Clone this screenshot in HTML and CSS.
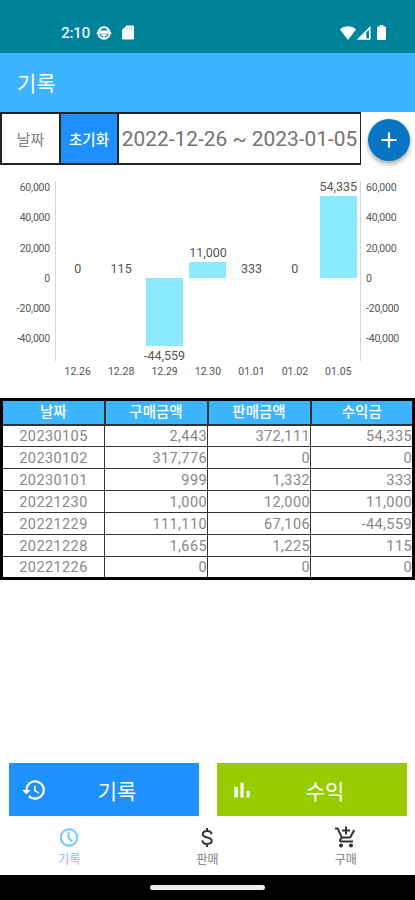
FILE: index.html
```html
<!DOCTYPE html>
<html lang="ko">
<head>
    <meta charset="UTF-8">
    <meta name="viewport" content="width=device-width, initial-scale=1.0">
    <title>기록</title>
    <link rel="stylesheet" href="styles.css">
</head>
<body>

    <div class="status-bar">
        <span class="time">2:10</span>
        <svg class="status-sync" width="16" height="16" viewBox="0 0 16 16">
            <circle cx="8" cy="8" r="5.7" fill="none" stroke="#fff" stroke-width="2"/>
            <path d="M0.6 8h14.8M4 6.3h8M5 10h6M8 10v3" fill="none" stroke="#fff" stroke-width="1.7"/>
        </svg>
        <svg class="status-card" width="12" height="15" viewBox="0 0 12 15">
            <path d="M4.5 0.5H11a1 1 0 0 1 1 1V13.500a1 1 0 0 1-1 1H1a1 1 0 0 1-1-1V5z" fill="#fff"/>
            <path d="M5 2v2.200M7.300 2v2.200M9.600 2v2.200" stroke="#7fc0cb" stroke-width="0.7"/>
        </svg>
        <div class="status-right">
            <svg width="16" height="14" viewBox="0 0 16 14">
                <path d="M8 14L0 3.500C4.500-0.700 11.500-0.700 16 3.500z" fill="#fff"/>
            </svg>
            <svg width="14" height="14" viewBox="0 0 14 14">
                <path d="M12.800 1.800V13H1.600zM8.500 6v7" fill="none" stroke="#fff" stroke-width="1.500"/>
                <path d="M8.500 6V13H1.600z" fill="#fff"/>
            </svg>
            <svg class="battery" width="9" height="15" viewBox="0 0 9 15">
                <path d="M2.700 0h3.600v1.600H8a1 1 0 0 1 1 1V14a1 1 0 0 1-1 1H1a1 1 0 0 1-1-1V2.600a1 1 0 0 1 1-1h1.700z" fill="#fff"/>
            </svg>
        </div>
    </div>

    <h1 class="app-bar">기록</h1>

    <div class="filter">
        <div class="filter-box">
            <div class="filter-label">날짜</div>
            <button class="reset-btn">초기화</button>
            <div class="range">2022-12-26 ~ 2023-01-05</div>
        </div>
        <button class="add-btn">
            <svg width="18" height="18" viewBox="0 0 18 18">
                <path d="M9 1.500v15M1.500 9h15" stroke="#fff" stroke-width="2.200"/>
            </svg>
        </button>
    </div>

    <div class="chart">
        <div class="axis axis-left">
            <span>60,000</span><span>40,000</span><span>20,000</span><span>0</span><span>-20,000</span><span>-40,000</span>
        </div>
        <div class="plot">
            <div class="col">
                <div class="plus"><span>0</span></div>
                <div class="minus"></div>
                <div class="day">12.26</div>
            </div>
            <div class="col">
                <div class="plus"><span>115</span></div>
                <div class="minus"></div>
                <div class="day">12.28</div>
            </div>
            <div class="col">
                <div class="plus"></div>
                <div class="minus"><div class="bar" style="height: 67.5px"></div><span>-44,559</span></div>
                <div class="day">12.29</div>
            </div>
            <div class="col">
                <div class="plus"><span>11,000</span><div class="bar" style="height: 16.5px"></div></div>
                <div class="minus"></div>
                <div class="day">12.30</div>
            </div>
            <div class="col">
                <div class="plus"><span>333</span><div class="bar thin" style="height: 0.5px"></div></div>
                <div class="minus"></div>
                <div class="day">01.01</div>
            </div>
            <div class="col">
                <div class="plus"><span>0</span></div>
                <div class="minus"></div>
                <div class="day">01.02</div>
            </div>
            <div class="col">
                <div class="plus"><span>54,335</span><div class="bar" style="height: 82px"></div></div>
                <div class="minus"></div>
                <div class="day">01.05</div>
            </div>
        </div>
        <div class="axis axis-right">
            <span>60,000</span><span>40,000</span><span>20,000</span><span>0</span><span>-20,000</span><span>-40,000</span>
        </div>
    </div>

    <table class="records">
        <thead>
            <tr><th>날짜</th><th>구매금액</th><th>판매금액</th><th>수익금</th></tr>
        </thead>
        <tbody>
            <tr><td>20230105</td><td>2,443</td><td>372,111</td><td>54,335</td></tr>
            <tr><td>20230102</td><td>317,776</td><td>0</td><td>0</td></tr>
            <tr><td>20230101</td><td>999</td><td>1,332</td><td>333</td></tr>
            <tr><td>20221230</td><td>1,000</td><td>12,000</td><td>11,000</td></tr>
            <tr><td>20221229</td><td>111,110</td><td>67,106</td><td>-44,559</td></tr>
            <tr><td>20221228</td><td>1,665</td><td>1,225</td><td>115</td></tr>
            <tr><td>20221226</td><td>0</td><td>0</td><td>0</td></tr>
        </tbody>
    </table>

    <div class="actions">
        <button class="action action-record">
            <svg width="26" height="26" viewBox="0 0 24 24" fill="#fff">
                <path d="M13 3a9 9 0 0 0-9 9H1l3.900 3.900L9 12H6a7 7 0 1 1 2.060 4.940l-1.420 1.420A9 9 0 1 0 13 3zm-1 5v5l4.280 2.540.720-1.210-3.500-2.080V8z"/>
            </svg>
            <span>기록</span>
        </button>
        <button class="action action-profit">
            <svg width="26" height="26" viewBox="0 0 24 24" fill="#fff">
                <path d="M5 9.200h3.200V19H5zM10.600 5h2.900v14h-2.900zM16.200 13H19v6h-2.800z"/>
            </svg>
            <span>수익</span>
        </button>
    </div>

    <nav class="tabs">
        <a class="tab active">
            <svg width="22" height="22" viewBox="0 0 24 24" fill="none" stroke="#6bc4fa" stroke-width="2">
                <circle cx="12" cy="12" r="9"/>
                <path d="M11.500 6v6.500l4.200 4"/>
            </svg>
            <span>기록</span>
        </a>
        <a class="tab">
            <svg width="26" height="26" viewBox="0 0 24 24" fill="none" stroke="#333" stroke-width="1.9">
                <path d="M12 2.800v3M12 18.200v3M16.300 8.900C16.100 6.900 14.500 5.800 12.100 5.800 9.700 5.800 8 6.900 8 8.800c0 4.200 8.600 2.200 8.600 6.400 0 1.900-1.800 3-4.400 3-2.700 0-4.500-1.200-4.700-3.400"/>
            </svg>
            <span>판매</span>
        </a>
        <a class="tab">
            <svg width="24" height="24" viewBox="0 0 24 24" fill="#333">
                <path d="M11 9h2V6h3V4h-3V1h-2v3H8v2h3v3zm-4 9c-1.100 0-1.990.900-1.990 2S5.900 22 7 22s2-.900 2-2-.900-2-2-2zm10 0c-1.100 0-1.990.900-1.990 2s.890 2 1.990 2 2-.900 2-2-.900-2-2-2zm-9.830-3.250.030-.120.900-1.630h7.450c.750 0 1.410-.410 1.750-1.030l3.860-7.010L19.420 4h-.010l-1.100 2-2.760 5H8.530l-.130-.270L6.160 6l-.950-2-.940-2H1v2h2l3.600 7.590-1.350 2.450c-.160.280-.250.610-.250.960 0 1.100.900 2 2 2h12v-2H7.420c-.130 0-.250-.110-.250-.250z"/>
            </svg>
            <span>구매</span>
        </a>
    </nav>

    <div class="gesture-bar"><div class="handle"></div></div>

</body>
</html>
```
FILE: styles.css
```css
*{
    box-sizing: border-box;
}

body{
    margin: 0;
    height: 900px;
    display: flex;
    flex-direction: column;
    background: #fff;
    font-family: Roboto, "Noto Sans CJK KR", sans-serif;
    overflow: hidden;
}

button{
    border: none;
    padding: 0;
    font-family: inherit;
    color: #fff;
}

svg{
    display: block;
    flex: none;
}

.status-bar{
    height: 53px;
    padding: 12px 29px 0 61px;
    display: flex;
    align-items: center;
    background: #008299;
    color: #e0f0f3;
}

.time{
    width: 35px;
    font-size: 15.500px;
    letter-spacing: -0.4px;
    font-weight: 500;
}

.status-card{
    margin-left: 10px;
}

.status-right{
    margin-left: auto;
    display: flex;
    align-items: center;
    gap: 1px;
}

.battery{
    margin-left: 5px;
}

.app-bar{
    margin: 0;
    height: 59px;
    padding: 0 17px;
    background: #3db4ff;
    color: #fff;
    font-size: 21px;
    font-weight: 400;
    line-height: 62px;
}

.filter{
    height: 53px;
    display: flex;
}

.filter-box{
    width: 361px;
    display: grid;
    grid-template-columns: 57px 56px 1fr;
    gap: 2px;
    padding: 2px 1px 2px 2px;
    background: #222;
}

.filter-box > *{
    display: flex;
    justify-content: center;
    align-items: center;
    background: #fff;
    white-space: nowrap;
}

.filter-label{
    color: #808080;
    font-size: 15px;
}

.filter-box .reset-btn{
    background: #1e90ff;
    font-size: 14.500px;
    font-weight: 500;
}

.range{
    color: #737373;
    font-size: 20.900px;
}

.add-btn{
    width: 42px;
    height: 42px;
    margin: 7px 0 0 7px;
    display: flex;
    justify-content: center;
    align-items: center;
    border-radius: 50%;
    background: #0775c4;
    box-shadow: 0 3px 5px rgba(0,0,0,0.35);
}

.chart{
    height: 233px;
    padding-top: 16px;
    display: flex;
    color: #555;
}

.axis{
    display: flex;
    flex-direction: column;
    padding-top: 7px;
    margin-top: -15px;
    font-size: 10.500px;
    letter-spacing: -0.2px;
    line-height: 30.300px;
}

.axis-left{
    width: 55px;
    padding-right: 5px;
    text-align: right;
}

.axis-right{
    padding-left: 5px;
}

.plot{
    width: 306px;
    height: 180px;
    display: grid;
    grid-template-columns: repeat(7, 1fr);
    border: solid #d5d5d5;
    border-width: 0 1px;
}

.col{
    display: flex;
    flex-direction: column;
    font-size: 12.500px;
    line-height: 18px;
}

.plus,
.minus{
    display: flex;
    flex-direction: column;
    align-items: center;
    flex: none;
}

.plus{
    height: 97px;
    justify-content: flex-end;
}

.minus{
    height: 83px;
}

.minus span{
    margin-top: 1px;
}

.bar{
    width: 37px;
    background: #8ceaff;
    flex: none;
}

.bar.thin{
    opacity: 0.2;
}

.day{
    text-align: center;
    font-size: 10.500px;
    line-height: 21px;
}

.records{
    width: 415px;
    height: 182px;
    table-layout: fixed;
    border-collapse: collapse;
    border: 3px solid #000;
    color: #888;
    font-size: 14.500px;
    letter-spacing: 0.4px;
}

.records th,
.records td{
    height: 22px;
    padding: 2px 0 0;
    border: 1px solid #333;
    line-height: 18px;
    text-align: right;
}

.records th{
    height: 25px;
    border-width: 2px;
    background: #3db4ff;
    color: #fff;
    font-weight: 500;
    letter-spacing: 0;
    text-align: center;
}

.records td:first-child{
    text-align: center;
}

.actions{
    margin-top: auto;
    padding: 0 8px 0 9px;
    display: flex;
    gap: 18px;
}

.action{
    flex: 1;
    height: 53px;
    padding: 0 12px;
    display: flex;
    align-items: center;
    font-size: 21px;
}

.action span{
    flex: 1;
    text-align: center;
}

.action-record{
    background: #1e90ff;
}

.action-profit{
    background: #99cc00;
}

.tabs{
    height: 59px;
    display: flex;
}

.tab{
    flex: 1;
    padding-top: 9px;
    display: flex;
    flex-direction: column;
    align-items: center;
    color: #808080;
    font-size: 12px;
    line-height: 20px;
}

.tab svg{
    height: 25px;
}

.tab.active{
    color: #6bc4fa;
}

.gesture-bar{
    height: 25px;
    padding-top: 10px;
    background: #000;
}

.handle{
    width: 115px;
    height: 5px;
    margin: 0 auto;
    border-radius: 3px;
    background: #eee;
}
```
